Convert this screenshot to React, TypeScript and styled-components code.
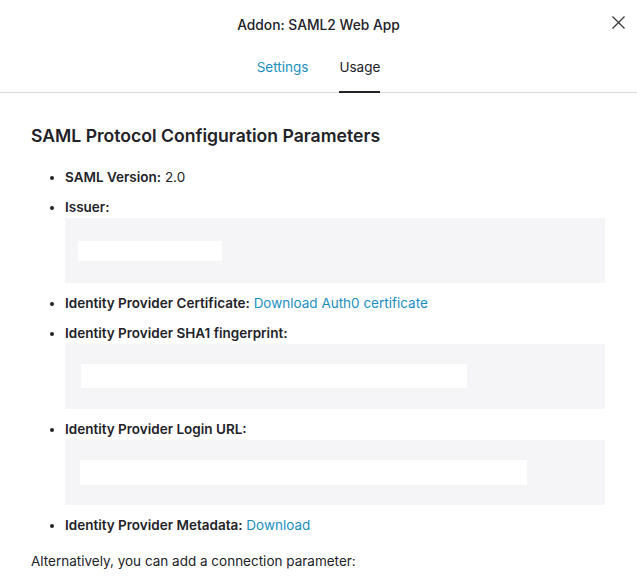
import React from "react";
import styled, { createGlobalStyle } from "styled-components";

const Global = createGlobalStyle`
  html, body { margin: 0; padding: 0; background: #fff; }
  body { font-family: Inter, "Noto Sans", sans-serif; color: #222228; }
`;

const Page = styled.div`
  width: 637px;
  height: 579px;
  overflow: hidden;
  position: relative;
`;

const Header = styled.header`
  display: flex;
  flex-direction: column;
  align-items: center;
  border-bottom: 1px solid #d9d9d9;
  position: relative;
`;

const Title = styled.h1`
  margin: 15px 0 0;
  font-size: 13.8px;
  font-weight: 500;
  line-height: 20px;
  color: #222228;
`;

const Close = styled.button`
  position: absolute;
  right: 11px;
  top: 14px;
  width: 16px;
  height: 16px;
  padding: 0;
  border: 0;
  background: none;
  display: flex;
  align-items: center;
  justify-content: center;
  cursor: pointer;
`;

const Tabs = styled.nav`
  display: flex;
  gap: 31px;
  margin-top: 22px;
`;

const Tab = styled.a<{ $active?: boolean }>`
  font-size: 13.5px;
  line-height: 20px;
  padding-bottom: 14px;
  color: ${(p) => (p.$active ? "#222228" : "#1a8fc0")};
  border-bottom: 2px solid ${(p) => (p.$active ? "#222228" : "transparent")};
  margin-bottom: -1px;
  text-decoration: none;
`;

const Content = styled.main`
  padding: 32px 32px 0 31px;
`;

const Heading = styled.h2`
  margin: 0;
  font-size: 17.6px;
  font-weight: 600;
  line-height: 22px;
  color: #222228;
`;

const List = styled.ul`
  margin: 20px 0 0;
  padding: 0 0 0 34px;
  list-style: disc;
  font-size: 13.5px;
  line-height: 20px;
`;

const Item = styled.li`
  margin-bottom: 10px;
  &::marker { font-size: 12px; }
`;

const Label = styled.strong`
  font-weight: 600;
`;

const Link = styled.a`
  color: #1a8fc0;
  text-decoration: none;
`;

const CodeBox = styled.div<{ $padLeft: number; $padTop: number }>`
  margin-top: 1px;
  height: 65px;
  box-sizing: border-box;
  background: #f5f5f7;
  padding: ${(p) => p.$padTop}px 0 0 ${(p) => p.$padLeft}px;
`;

const Redacted = styled.div<{ $w: number; $h: number }>`
  width: ${(p) => p.$w}px;
  height: ${(p) => p.$h}px;
  background: #fff;
`;

const Note = styled.p`
  margin: 16px 0 0;
  font-size: 13.5px;
  line-height: 20px;
`;

export default function App() {
  return (
    <Page>
      <Global />
      <Header>
        <Title>Addon: SAML2 Web App</Title>
        <Close aria-label="Close">
          <svg width="13" height="13" viewBox="0 0 13 13">
            <path d="M0.5 0.5 L12.5 12.5 M12.5 0.5 L0.5 12.5" stroke="#333" strokeWidth="1.2" fill="none" />
          </svg>
        </Close>
        <Tabs>
          <Tab>Settings</Tab>
          <Tab $active>Usage</Tab>
        </Tabs>
      </Header>
      <Content>
        <Heading>SAML Protocol Configuration Parameters</Heading>
        <List>
          <Item>
            <Label>SAML Version:</Label> 2.0
          </Item>
          <Item>
            <Label>Issuer:</Label>
            <CodeBox $padLeft={13} $padTop={23}>
              <Redacted $w={144} $h={20} />
            </CodeBox>
          </Item>
          <Item>
            <Label>Identity Provider Certificate:</Label> <Link>Download Auth0 certificate</Link>
          </Item>
          <Item>
            <Label>Identity Provider SHA1 fingerprint:</Label>
            <CodeBox $padLeft={16} $padTop={20}>
              <Redacted $w={386} $h={24} />
            </CodeBox>
          </Item>
          <Item>
            <Label>Identity Provider Login URL:</Label>
            <CodeBox $padLeft={15} $padTop={20}>
              <Redacted $w={447} $h={25} />
            </CodeBox>
          </Item>
          <Item>
            <Label>Identity Provider Metadata:</Label> <Link>Download</Link>
          </Item>
        </List>
        <Note>Alternatively, you can add a connection parameter:</Note>
      </Content>
    </Page>
  );
}
